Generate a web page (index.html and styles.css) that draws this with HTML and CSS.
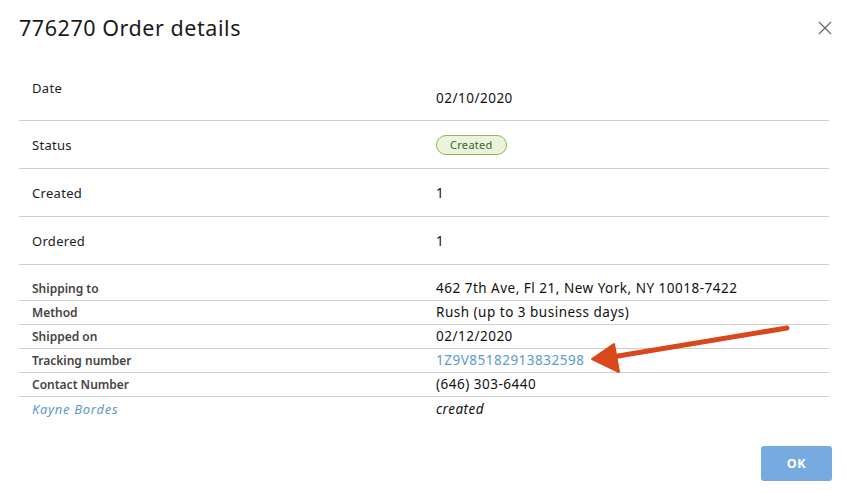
FILE: index.html
```html
<!DOCTYPE html>
<html>
<head>
<meta charset="utf-8">
<link rel="stylesheet" href="styles.css">
</head>
<body>
<div class="modal">
  <div class="header">
    <h1 class="title">776270 Order details</h1>
    <button class="close" aria-label="Close">
      <svg width="14" height="14" viewBox="0 0 14 14"><path d="M1 1L13 13M13 1L1 13" stroke="#6a6a6a" stroke-width="1.3" fill="none"/></svg>
    </button>
  </div>
  <div class="details">
    <div class="row row-date"><div class="label label-top">Date</div><div class="value">02/10/2020</div></div>
    <div class="row row-main"><div class="label">Status</div><div class="value"><span class="badge">Created</span></div></div>
    <div class="row row-main"><div class="label">Created</div><div class="value">1</div></div>
    <div class="row row-main"><div class="label">Ordered</div><div class="value">1</div></div>
    <div class="row row-small row-first"><div class="label bold">Shipping to</div><div class="value">462 7th Ave, Fl 21, New York, NY 10018-7422</div></div>
    <div class="row row-small"><div class="label bold">Method</div><div class="value">Rush (up to 3 business days)</div></div>
    <div class="row row-small"><div class="label bold">Shipped on</div><div class="value">02/12/2020</div></div>
    <div class="row row-small"><div class="label bold">Tracking number</div><div class="value link">1Z9V85182913832598</div></div>
    <div class="row row-small"><div class="label bold">Contact Number</div><div class="value">(646) 303-6440</div></div>
    <div class="row row-small row-last"><div class="label link italic">Kayne Bordes</div><div class="value italic">created</div></div>
  </div>
  <div class="footer"><button class="ok">OK</button></div>
  <svg class="arrow" width="847" height="493" viewBox="0 0 847 493">
    <path d="M787 328 L612 357" stroke="#d9481c" stroke-width="5" stroke-linecap="round" fill="none"/>
    <path d="M592 359 L614 344 L619 372 Z" fill="#d9481c" stroke="#d9481c" stroke-width="2" stroke-linejoin="round"/>
  </svg>
</div>
</body>
</html>
```
FILE: styles.css
```css
* { box-sizing: border-box; }
body {
  margin: 0;
  background: #fff;
  font-family: "Noto Sans", "Open Sans", sans-serif;
  color: #1b1b1b;
}
.modal {
  position: relative;
  width: 847px;
  height: 493px;
  padding: 0 18px 0 19px;
}
.header {
  display: flex;
  justify-content: space-between;
  align-items: flex-start;
  padding-top: 13px;
  height: 76px;
}
.title {
  margin: 0;
  font-size: 21.5px;
  font-weight: 400;
  line-height: 30px;
  color: #1a1a1a;
  letter-spacing: 0.55px;
}
.close {
  border: 0;
  background: none;
  padding: 0;
  margin: 8px -3px 0 0;
  width: 14px;
  height: 14px;
  display: flex;
}
.details {
  width: 810px;
}
.row {
  display: grid;
  grid-template-columns: 417px 1fr;
  border-bottom: 1px solid #cfcfcf;
  font-size: 13px;
}
.label { padding-left: 13px; letter-spacing: 0.3px; }
.row-date { height: 45px; }
.row-date .label-top { line-height: 24px; }
.row-date .value { align-self: center; }
.row-main { height: 48px; align-items: center; }
.row-small { height: 24px; align-items: center; line-height: 23px; }
.row-first { height: 36px; align-items: end; }
.row-last { border-bottom: 0; }
.bold { font-weight: 600; font-size: 12px; color: #444; letter-spacing: 0; }
.link { color: #5a9bd0; }
.italic { font-style: italic; }
.label.italic { letter-spacing: 0.7px; }
.value { color: #111; font-size: 13.5px; letter-spacing: 0.5px; }
.value.link { color: #5a9bd0; }
.badge {
  display: inline-block;
  height: 20px;
  line-height: 17px;
  padding: 0 13px;
  border: 1px solid #8fb55a;
  border-radius: 10px;
  background: #eaf3dc;
  color: #3f6326;
  font-size: 11px;
  letter-spacing: 0.3px;
}
.footer {
  display: flex;
  justify-content: flex-end;
  margin-top: 25px;
  padding-right: 0;
}
.ok {
  width: 71px;
  height: 35px;
  border: 0;
  border-radius: 3px;
  background: #77abdf;
  color: #fff;
  font-family: "Noto Sans", sans-serif;
  font-weight: 700;
  font-size: 12.5px;
  letter-spacing: 0.6px;
  margin-right: -3px;
}
.arrow {
  position: absolute;
  left: 0;
  top: 0;
  pointer-events: none;
}
```
